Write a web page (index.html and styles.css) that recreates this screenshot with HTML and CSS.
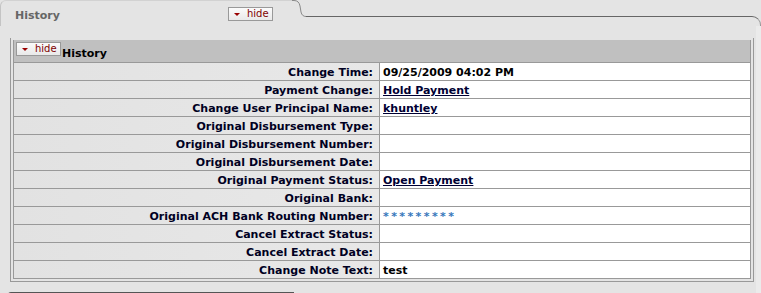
FILE: index.html
```html
<!DOCTYPE html>
<html lang="en">
<head>
    <meta charset="UTF-8">
    <title>History</title>
    <link rel="stylesheet" href="styles.css">
</head>
<body>
    <div class="tabhead">
        <div class="tab">
            <span class="tab-title">History</span>
            <button class="hide"><span class="arrow"></span>hide</button>
        </div>
        <svg class="tab-curve" width="14" height="26" viewBox="0 0 14 26">
            <path d="M0 0.5 H2 Q7 0.5 8 6 L9 12 Q10 16.5 14 16.5" fill="none" stroke="#8a8a8a" stroke-width="1"/>
        </svg>
        <div class="tab-rest"></div>
    </div>

    <div class="panel">
        <div class="box">
            <div class="fields">
                <div class="fields-head">
                    <button class="hide"><span class="arrow"></span>hide</button>
                    <span class="head-title">History</span>
                </div>

                <div class="lbl">Change Time:</div>
                <div class="val">09/25/2009 04:02 PM</div>

                <div class="lbl">Payment Change:</div>
                <div class="val"><a href="#">Hold Payment</a></div>

                <div class="lbl">Change User Principal Name:</div>
                <div class="val"><a href="#">khuntley</a></div>

                <div class="lbl">Original Disbursement Type:</div>
                <div class="val"></div>

                <div class="lbl">Original Disbursement Number:</div>
                <div class="val"></div>

                <div class="lbl">Original Disbursement Date:</div>
                <div class="val"></div>

                <div class="lbl">Original Payment Status:</div>
                <div class="val"><a href="#">Open Payment</a></div>

                <div class="lbl">Original Bank:</div>
                <div class="val"></div>

                <div class="lbl">Original ACH Bank Routing Number:</div>
                <div class="val masked">*********</div>

                <div class="lbl">Cancel Extract Status:</div>
                <div class="val"></div>

                <div class="lbl">Cancel Extract Date:</div>
                <div class="val"></div>

                <div class="lbl last">Change Note Text:</div>
                <div class="val last">test</div>
            </div>
        </div>
        <div class="next-tab"></div>
    </div>
</body>
</html>
```

FILE: styles.css
```css
body {
    margin: 0;
    background-color: #e4e4e4;
    font-family: "DejaVu Sans", Verdana, sans-serif;
    font-size: 11px;
    color: #000;
}

/* tab strip */
.tabhead {
    display: flex;
    height: 26px;
}
.tab {
    flex: 0 0 292px;
    box-sizing: border-box;
    display: flex;
    align-items: flex-start;
    padding: 6px 0 0 14px;
    border-top: 1px solid #d2d2d2;
    border-left: 1px solid #c4c4c4;
    border-top-left-radius: 6px;
}
.tab-title {
    width: 213px;
    padding-top: 2px;
    font-weight: bold;
    color: #666;
}
.tab-curve {
    flex: 0 0 14px;
    display: block;
}
.tab-rest {
    flex: 1;
    height: 9px;
    margin-top: 16px;
    border-top: 1px solid #666;
    border-right: 1px solid #999;
    border-top-right-radius: 9px;
}

/* hide buttons */
.hide {
    display: inline-flex;
    align-items: center;
    box-sizing: border-box;
    width: 45px;
    height: 14px;
    margin: 0;
    padding: 0 0 0 5px;
    border: 1px solid #999;
    background: linear-gradient(#fbfbfb, #e9e9e9);
    font-family: "DejaVu Sans", Verdana, sans-serif;
    font-size: 10px;
    line-height: 12px;
    color: #800000;
    cursor: pointer;
}
.arrow {
    width: 0;
    height: 0;
    margin-right: 7px;
    border-left: 3px solid transparent;
    border-right: 3px solid transparent;
    border-top: 3px solid #990000;
}

/* panel */
.panel {
    padding: 12px 2px 0 10px;
    border-right: 5px solid #ebebeb;
}
.box {
    padding: 2px;
    border: 1px solid #999;
    border-top: none;
}
.fields {
    display: grid;
    grid-template-columns: 366px 1fr;
    border: 1px solid #999;
    border-top: none;
}
.fields-head {
    grid-column: 1 / -1;
    display: flex;
    align-items: flex-start;
    height: 23px;
    padding: 2px 0 0 2px;
    box-sizing: border-box;
    background-color: #c0c0c0;
    border-bottom: 1px solid #999;
}
.head-title {
    margin-left: 1px;
    padding-top: 5px;
    font-weight: bold;
    font-size: 11px;
    line-height: 13px;
}
.lbl, .val {
    height: 18px;
    line-height: 17px;
    padding-top: 1px;
    box-sizing: border-box;
    border-bottom: 1px solid #999;
    white-space: nowrap;
}
.lbl {
    padding-right: 6px;
    text-align: right;
    font-weight: bold;
    color: #000022;
    background: linear-gradient(to right, #e2e2e2, #e8e8e8);
    border-right: 1px solid #999;
}
.val {
    padding-left: 3px;
    background-color: #fff;
    font-weight: bold;
}
.val a {
    color: #000033;
}
.val.masked {
    color: #3677bb;
    letter-spacing: 2.4px;
}
.lbl.last, .val.last {
    border-bottom: none;
    height: 17px;
}

.next-tab {
    width: 286px;
    height: 2px;
    margin: 10px 0 0 -2px;
    border-top: 1px solid #555;
    border-top-left-radius: 3px;
}
```
